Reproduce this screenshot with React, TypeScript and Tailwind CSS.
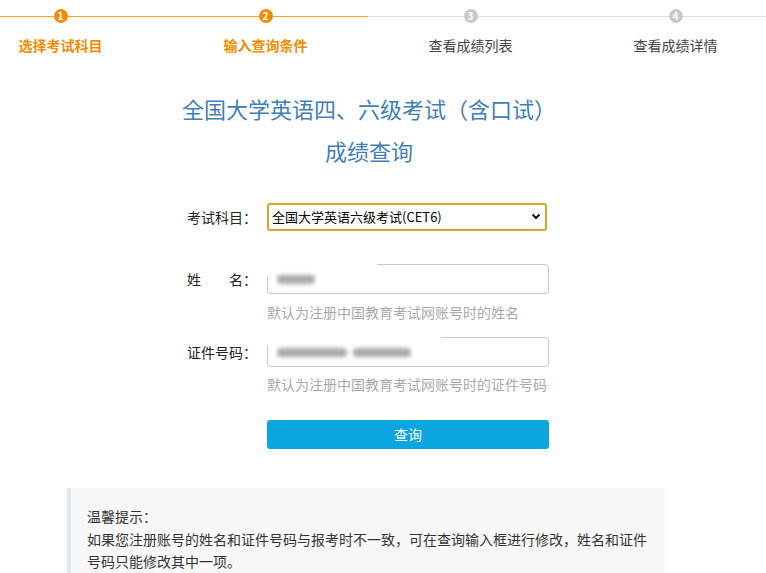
const steps = [
  { n: 1, label: "选择考试科目", active: true },
  { n: 2, label: "输入查询条件", active: true },
  { n: 3, label: "查看成绩列表", active: false },
  { n: 4, label: "查看成绩详情", active: false },
]

const font = { fontFamily: '"Noto Sans CJK SC", "Noto Sans", "Liberation Sans", sans-serif' }

function Steps() {
  return (
    <div className="-ml-[42px] flex w-[820px] pt-[9px]">
      {steps.map((s) => (
        <div key={s.n} className="flex w-[205px] flex-col items-center">
          <div className="flex h-[14px] w-full items-center">
            <div className={`h-px flex-1 ${s.active ? "bg-[#f5a623]" : "bg-[#dcdcdc]"}`} />
            <div
              className={`flex h-[14px] w-[14px] items-center justify-center rounded-full text-[10px] font-bold leading-none text-white ${
                s.active ? "bg-[#f08c00]" : "bg-[#c9c9c9]"
              }`}
            >
              {s.n}
            </div>
            <div className={`h-px flex-1 ${s.active ? "bg-[#f5a623]" : "bg-[#dcdcdc]"}`} />
          </div>
          <div
            className={`mt-[12px] text-[14px] leading-[20px] ${
              s.active ? "font-bold text-[#f08c00]" : "text-[#444]"
            }`}
          >
            {s.label}
          </div>
        </div>
      ))}
    </div>
  )
}

function Blurred({ w }: { w: number }) {
  return (
    <span
      className="block h-[9px] rounded-sm bg-[#a8a8a8] blur-[2px]"
      style={{ width: w }}
    />
  )
}

export default function App() {
  return (
    <main className="min-h-screen overflow-hidden bg-white text-[#333]" style={font}>
      <Steps />

      <h1 className="mt-[32px] pr-[28px] text-center text-[22px] font-normal leading-[42px] text-[#3f7fb6]">
        全国大学英语四、六级考试（含口试）
        <br />
        成绩查询
      </h1>

      <div className="ml-[187px] mt-[32px] w-[362px]">
        <div className="flex items-center">
          <label className="w-[80px] text-[14px] text-[#222]">考试科目：</label>
          <div className="relative w-[280px]">
            <select className="h-[28px] w-full appearance-none rounded-[3px] border-2 border-[#d8a72a] bg-white pl-[3px] text-[13px] text-black outline-none">
              <option>全国大学英语六级考试(CET6)</option>
            </select>
            <svg
              className="pointer-events-none absolute right-[6px] top-[10px]"
              width="10"
              height="7"
              viewBox="0 0 10 7"
            >
              <path d="M1.5 1.5 L5 5 L8.5 1.5" fill="none" stroke="#111" strokeWidth="2" />
            </svg>
          </div>
        </div>

        <div className="mt-[33px] flex items-center">
          <label className="w-[80px] text-[14px] text-[#222]">姓　　名：</label>
          <div className="relative flex h-[30px] w-[282px] items-center rounded-[4px] border border-[#c8c8c8] px-[9px]">
            <div className="pointer-events-none absolute -left-[3px] -top-[3px] h-[14px] w-[112px] bg-white blur-[1px]" />
            <Blurred w={38} />
          </div>
        </div>
        <p className="ml-[80px] mt-[8px] text-[14px] leading-[20px] text-[#a9a9a9]">
          默认为注册中国教育考试网账号时的姓名
        </p>

        <div className="mt-[15px] flex items-center">
          <label className="w-[80px] text-[14px] text-[#222]">证件号码：</label>
          <div className="relative flex h-[30px] w-[282px] items-center gap-[6px] rounded-[4px] border border-[#c8c8c8] px-[9px]">
            <div className="pointer-events-none absolute -left-[3px] -top-[4px] h-[12px] w-[176px] bg-white blur-[1px]" />
            <Blurred w={70} />
            <Blurred w={58} />
          </div>
        </div>
        <p className="ml-[80px] mt-[7px] text-[14px] leading-[20px] text-[#a9a9a9]">
          默认为注册中国教育考试网账号时的证件号码
        </p>

        <button className="ml-[80px] mt-[26px] h-[29px] w-[282px] rounded-[3px] bg-[#0ba5e0] text-[14px] text-white">
          查询
        </button>
      </div>

      <div className="ml-[67px] mt-[39px] w-[598px] border-l-4 border-[#dfe7f0] bg-[#f8f8f8] pb-[12px] pl-[16px] pr-[12px] pt-[17px] text-[14px] leading-[22.5px] text-[#333]">
        <p>温馨提示：</p>
        <p>
          如果您注册账号的姓名和证件号码与报考时不一致，可在查询输入框进行修改，姓名和证件
          <br />
          号码只能修改其中一项。
        </p>
      </div>
    </main>
  )
}
